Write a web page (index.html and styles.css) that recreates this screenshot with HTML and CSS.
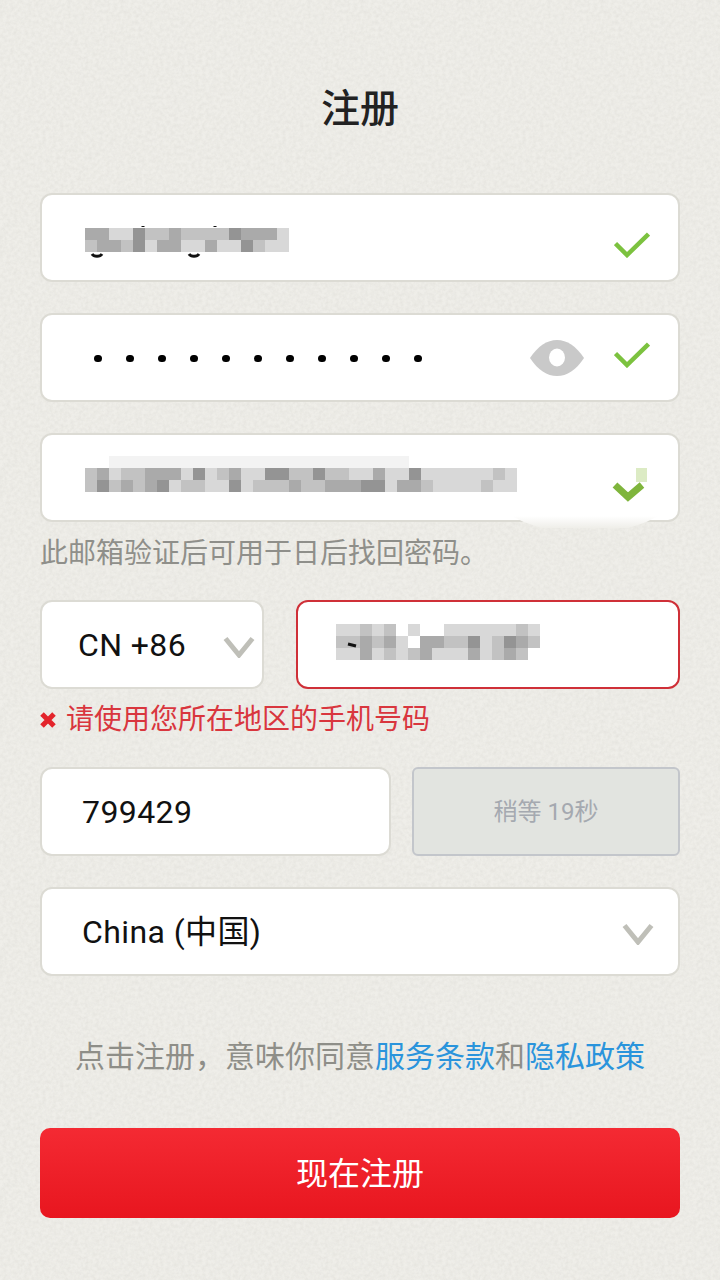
FILE: index.html
```html
<!DOCTYPE html>
<html lang="zh-CN">
<head>
  <meta charset="UTF-8" />
  <meta name="viewport" content="width=device-width, initial-scale=1.0" />
  <title>注册</title>
  <link rel="stylesheet" href="styles.css">
</head>
<body>
  <div class="container">
    <h1>注册</h1>

    <div class="field">
      <svg class="mosaic mosaic-name" width="204" height="36" viewBox="0 0 204 36">
        <path class="ink" d="M7 32c2 3 8 3 10 0M104 32c2 3 8 3 10 0M58 4v1M130 4v1" />
        <path class="t1" d="M24 12h24M192 12h12M60 24h12M96 24h24M132 24h24M180 24h24" />
        <path class="t2" d="M60 12h24M96 12h48M0 24h12M36 24h12M168 24h12" />
        <path class="t3" d="M0 12h24M84 12h12M156 12h36M12 24h24M72 24h24M120 24h12" />
        <path class="t4" d="M48 12h12M144 12h12M48 24h12M156 24h12" />
      </svg>
      <svg class="icon-check icon-check-low" width="36" height="26" viewBox="0 0 36 26"><path d="M1.5 11.5L13 23L34.5 2" /></svg>
    </div>

    <div class="field">
      <div class="dots">
        <span></span><span></span><span></span><span></span><span></span><span></span>
        <span></span><span></span><span></span><span></span><span></span>
      </div>
      <svg class="icon-eye" width="54" height="36" viewBox="0 0 54 36">
        <path d="M0 18C8 6 17 0 27 0s19 6 27 18C46 30 37 36 27 36S8 30 0 18z" />
        <ellipse cx="27" cy="17.500" rx="8" ry="9" />
      </svg>
      <svg class="icon-check" width="36" height="26" viewBox="0 0 36 26"><path d="M1.5 11.5L13 23L34.5 2" /></svg>
    </div>

    <div class="field">
      <svg class="mosaic mosaic-mail" width="432" height="36" viewBox="0 0 432 36">
        <path class="t0" d="M24 6h300" />
        <path class="t1" d="M24 18h12M96 18h12M120 18h12M156 18h24M264 18h24M300 18h24M336 18h72M420 18h12M84 30h12M120 30h24M156 30h12M300 30h12M348 30h48M408 30h24" />
        <path class="t2" d="M0 18h12M36 18h24M132 18h12M204 18h24M240 18h24M408 18h12M0 30h12M24 30h12M48 30h12M96 30h24M168 30h36M216 30h24M336 30h12M396 30h12" />
        <path class="t3" d="M12 18h12M60 18h36M144 18h12M288 18h12M36 30h12M60 30h12M204 30h12M240 30h36M312 30h24" />
        <path class="t4" d="M108 18h12M180 18h24M228 18h12M324 18h12M12 30h12M72 30h12M144 30h12M276 30h24" />
      </svg>
      <svg class="icon-check-smudged" width="36" height="36" viewBox="0 0 36 36">
        <rect x="24" y="0" width="11" height="14" />
        <path d="M3 17L16 29L30 17" />
      </svg>
      <div class="smudge"></div>
    </div>

    <p class="hint">此邮箱验证后可用于日后找回密码。</p>

    <div class="row">
      <div class="field field-code">
        <span class="value">CN +86</span>
        <svg class="chevron" width="32" height="22" viewBox="0 0 32 22"><path d="M2.500 2.500L16 19L29.500 2.500" /></svg>
      </div>
      <div class="field field-phone field-error">
        <svg class="mosaic" width="204" height="36" viewBox="0 0 204 36">
          <path class="t1" d="M0 6h24M36 6h12M72 6h12M108 6h72M192 6h12M60 18h12M144 18h12M0 30h24M36 30h12M60 30h12M96 30h36M144 30h12" />
          <path class="t2" d="M24 6h12M48 6h12M180 6h12M0 18h24M36 18h12M108 18h24M156 18h12M192 18h12M48 30h12M72 30h12M156 30h12M180 30h12" />
          <path class="t3" d="M24 18h12M48 18h12M84 18h24M180 18h12M24 30h12M84 30h12M132 30h12M168 30h12" />
          <path class="t4" d="M132 18h12M168 18h12" />
          <path class="ink" d="M12 20l8 2" />
        </svg>
      </div>
    </div>

    <p class="error">
      <svg class="icon-x" width="16" height="16" viewBox="0 0 16 16"><path d="M2 2L14 14M14 2L2 14" /></svg>
      请使用您所在地区的手机号码
    </p>

    <div class="row">
      <div class="field field-sms"><span class="value">799429</span></div>
      <div class="wait-btn">稍等 19秒</div>
    </div>

    <div class="field field-country">
      <span class="value">China (中国)</span>
      <svg class="chevron" width="32" height="22" viewBox="0 0 32 22"><path d="M2.500 2.500L16 19L29.500 2.500" /></svg>
    </div>

    <p class="terms">点击注册，意味你同意<a href="#">服务条款</a>和<a href="#">隐私政策</a></p>

    <button class="submit">现在注册</button>
  </div>
</body>
</html>
```

FILE: styles.css
```css
* {
  box-sizing: border-box;
}
html, body {
  height: 100%;
}
body {
  margin: 0;
  overflow: hidden;
  font-family: Roboto, "Noto Sans CJK SC", sans-serif;
  color: #111;
  background-color: #efeee9;
  background-image: url("data:image/svg+xml,%3Csvg xmlns='http://www.w3.org/2000/svg' width='240' height='240'%3E%3Cfilter id='n'%3E%3CfeTurbulence type='fractalNoise' baseFrequency='0.28' numOctaves='3' stitchTiles='stitch'/%3E%3CfeColorMatrix values='0 0 0 0 0.55 0 0 0 0 0.54 0 0 0 0 0.5 0.35 0 0 0 -0.1'/%3E%3C/filter%3E%3Crect width='240' height='240' filter='url(%23n)'/%3E%3C/svg%3E");
}
.container {
  padding: 0 40px;
}
h1 {
  height: 193px;
  margin: 0;
  padding-top: 17px;
  display: flex;
  align-items: center;
  justify-content: center;
  font-size: 39px;
  font-weight: 500;
  color: #222;
}
.field {
  position: relative;
  display: flex;
  align-items: center;
  height: 89px;
  padding: 0 28px 0 43px;
  margin-bottom: 31px;
  background: #fff;
  border: 2px solid #dcdbd4;
  border-radius: 12px;
}
.value {
  font-size: 32px;
  line-height: 1;
  letter-spacing: 0.4px;
}
.mosaic {
  flex: none;
  shape-rendering: crispEdges;
}
.mosaic path {
  fill: none;
  stroke-width: 12;
}
.mosaic .ink {
  stroke: #111;
  stroke-width: 3;
  shape-rendering: auto;
}
.mosaic .t0 { stroke: #f3f3f3; }
.mosaic .t1 { stroke: #d8d8d8; }
.mosaic .t2 { stroke: #c2c2c2; }
.mosaic .t3 { stroke: #aaaaaa; }
.mosaic .t4 { stroke: #949494; }
.mosaic-name {
  margin-top: 5px;
}
.mosaic-mail {
  margin-bottom: 7px;
}
.icon-check {
  margin-left: auto;
  margin-top: -5px;
  flex: none;
}
.icon-check-low {
  margin-top: 15px;
}
.icon-check path {
  fill: none;
  stroke: #7cc23f;
  stroke-width: 4.5;
}
.icon-check-smudged {
  margin-left: auto;
  margin-right: 2px;
  margin-top: 16px;
  flex: none;
}
.icon-check-smudged rect {
  fill: #dcebc4;
}
.icon-check-smudged path {
  fill: none;
  stroke: #7fb53c;
  stroke-width: 7;
}
.smudge {
  position: absolute;
  left: 470px;
  top: 81px;
  width: 146px;
  height: 12px;
  background: linear-gradient(#fff, #efeee9);
  clip-path: polygon(0 0, 100% 0, 92% 50%, 80% 100%, 20% 100%, 8% 50%);
}
.dots {
  display: flex;
  gap: 24.500px;
  padding-left: 9px;
  margin-top: 2px;
}
.dots span {
  width: 7.500px;
  height: 7.500px;
  border-radius: 50%;
  background: #000;
}
.icon-eye {
  margin-left: auto;
  flex: none;
}
.icon-eye + .icon-check {
  margin-left: 30px;
}
.icon-eye path {
  fill: #c9c9c9;
}
.icon-eye ellipse {
  fill: #fff;
}
.hint, .error, .terms {
  margin: 0;
  height: 60px;
  line-height: 64px;
  font-size: 28px;
}
.hint {
  margin: -31px 0 18px;
  color: #8f8f8a;
}
.row {
  display: flex;
  justify-content: space-between;
}
.row .field {
  margin-bottom: 0;
}
.field-code {
  width: 224px;
  padding: 0 7px 0 36px;
}
.field-code .chevron {
  margin-top: 4px;
}
.chevron {
  margin-left: auto;
  flex: none;
}
.chevron path {
  fill: none;
  stroke: #bfbfb8;
  stroke-width: 5;
}
.field-phone {
  width: 384px;
  padding-left: 38px;
}
.field-phone .mosaic {
  margin-bottom: 5px;
}
.field-error {
  border-color: #cf3038;
}
.error {
  display: flex;
  align-items: center;
  gap: 10px;
  margin-bottom: 18px;
  line-height: 60px;
  padding-top: 1px;
  color: #d9363e;
}
.icon-x {
  flex: none;
}
.icon-x path {
  fill: none;
  stroke: #e3242b;
  stroke-width: 5;
}
.field-sms {
  width: 351px;
  padding-left: 40px;
}
.wait-btn {
  width: 268px;
  height: 89px;
  padding-bottom: 5px;
  display: flex;
  align-items: center;
  justify-content: center;
  font-size: 24px;
  color: #a5a9b0;
  background: #e2e4e0;
  border: 2px solid #c3c6cb;
  border-radius: 6px;
}
.field-country {
  margin: 31px 0 0;
  padding: 0 24px 0 40px;
}
.field-country .chevron {
  margin-top: 4px;
}
.terms {
  margin-top: 50px;
  line-height: 62px;
  text-align: center;
  font-size: 30px;
  color: #8e8e88;
  white-space: nowrap;
}
.terms a {
  color: #2a94dc;
  text-decoration: none;
}
.submit {
  display: block;
  width: 100%;
  height: 90px;
  margin-top: 42px;
  padding-bottom: 5px;
  border: 0;
  border-radius: 10px;
  font-family: inherit;
  font-size: 32px;
  color: #fff;
  background: linear-gradient(#f42a33, #e8161f);
}
```
